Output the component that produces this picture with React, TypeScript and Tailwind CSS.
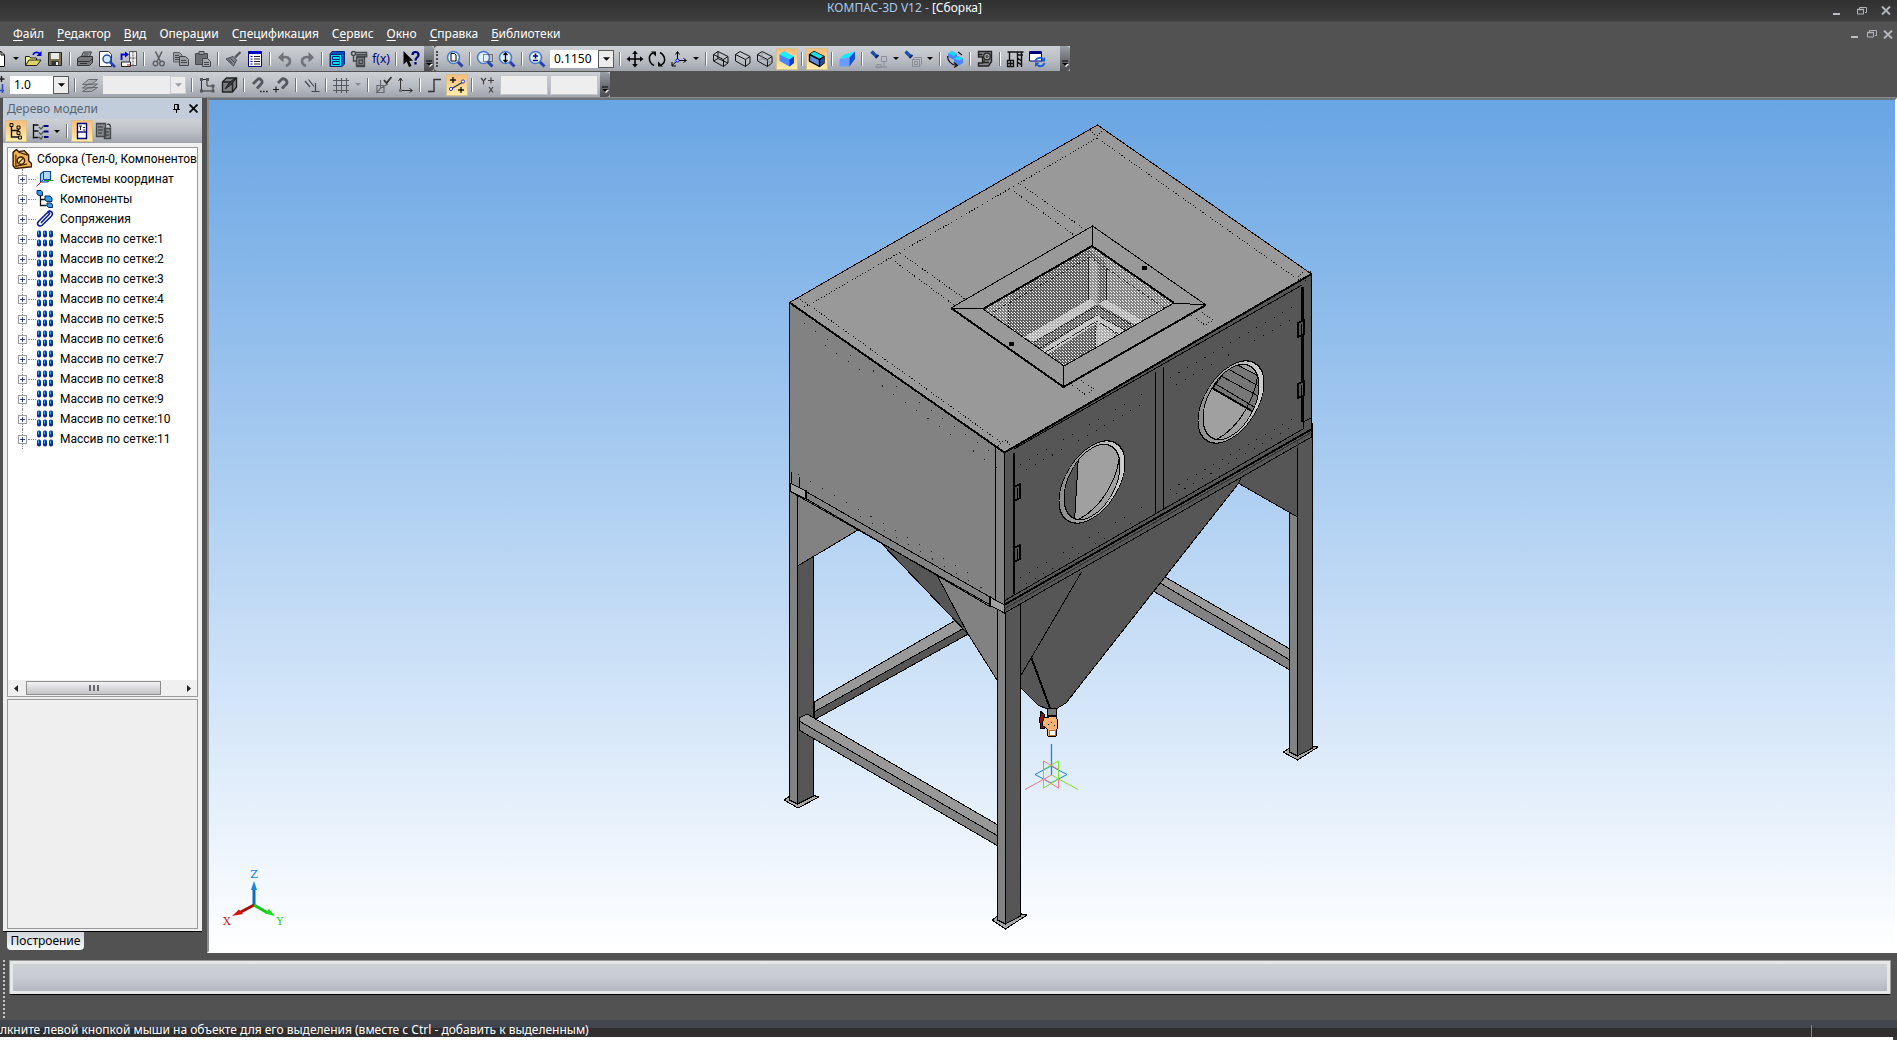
import type { ReactNode } from "react";

const C = "#2b2b2b";
const G = "#5d6066";
const NAVY = "#000080";

function Svg({ children, size = 18 }: { children: ReactNode; size?: number }) {
  return (
    <svg viewBox="0 0 18 18" width={size} height={size} fill="none" stroke={C} strokeWidth="1" aria-hidden="true" className="shrink-0">
      {children}
    </svg>
  );
}

const Lens = ({ children }: { children: ReactNode }) => (
  <Svg>
    <circle cx="7.5" cy="7.5" r="6" fill="#dff0fb" stroke="#4a7ac8" strokeWidth="1.6" />
    <path d="M12 12l4.5 4.5" stroke="#2a3fb0" strokeWidth="3" />
    {children}
  </Svg>
);

const cubeEdges = "M1.5 4.5L6 1.5L16 6.5V13L11.5 16.5L1.5 11Z";
const cubeInner = "M1.5 4.5L11.5 9.5V16.5M11.5 9.5L16 6.5";

const icons: Record<string, ReactNode> = {
  fresh: (
    <Svg>
      <path d="M3 1.5h8l3.500 3.500v11.500h-11.500z" fill="#fff" stroke="#000" />
      <path d="M11 1.500v3.500h3.500" stroke="#000" />
    </Svg>
  ),
  open: (
    <Svg>
      <path d="M1.500 15.500V6.500h4l1 1.500h6v2" fill="#f3ee9a" stroke="#222" />
      <path d="M1.500 15.500L5 10h12l-4 5.500z" fill="#d9d36a" stroke="#222" />
      <path d="M9 5c1-3 5-3.500 7-1" stroke="#0000d8" strokeWidth="1.800" />
      <path d="M17.500 1v5h-5z" fill="#0000d8" stroke="none" />
    </Svg>
  ),
  save: (
    <Svg>
      <path d="M2.500 2.500h13v13h-13z" fill="#7a7157" stroke="#222" />
      <path d="M5 3h8v6H5z" fill="#e8e8e8" stroke="none" />
      <path d="M5.500 11h7v4.500h-7z" fill="#333" stroke="none" />
      <path d="M10 12h2v3h-2z" fill="#fff" stroke="none" />
    </Svg>
  ),
  print: (
    <Svg>
      <path d="M5 7.500L7.500 2h8L13 7.500" fill="#aaadb2" stroke="#333" />
      <path d="M1.500 8.500l3-2h12v6l-3 3h-12z" fill="#777a7f" stroke="#333" />
      <path d="M1.500 11.500h12l3-3M4 13.500h7M8 4h5M7 6h5" stroke="#333" />
    </Svg>
  ),
  preview: (
    <Svg>
      <path d="M1.500 1.500h9l3 3v12h-12z" fill="#fff" stroke="#333" />
      <circle cx="9" cy="9" r="4" fill="#cfe6fa" stroke="#2a4a9c" strokeWidth="1.500" />
      <path d="M12 12l5 5" stroke="#2a3fb0" strokeWidth="2.600" />
    </Svg>
  ),
  convert: (
    <Svg>
      <path d="M9.500 1.500h7v14h-7z" fill="#eee" stroke="#555" />
      <path d="M9.500 8h7M13 1.500v14" stroke="#555" strokeDasharray="2 1" />
      <path d="M1.500 12h9v4.500h-9z" fill="#fff" stroke="#222" />
      <path d="M1.500 10V4.500h4" stroke="#0000d8" strokeWidth="1.800" />
      <path d="M5 1.500l4 3-4 3z" fill="#0000d8" stroke="none" />
      <path d="M7 15h3" stroke="#d00" />
    </Svg>
  ),
  cut: (
    <Svg>
      <path d="M5.500 1.500l5 10M12 1.500l-5 10" stroke={G} strokeWidth="1.600" />
      <circle cx="5.500" cy="13.500" r="2.300" stroke={G} strokeWidth="1.400" />
      <circle cx="12" cy="13.500" r="2.300" stroke={G} strokeWidth="1.400" />
    </Svg>
  ),
  copy: (
    <Svg>
      <path d="M1.500 2.500h6l2.500 2.500v7h-8.500z" fill="#9b9ea3" stroke={G} />
      <path d="M7.500 6.500h6l3 3v6h-9z" fill="#9b9ea3" stroke="#44474c" />
      <path d="M3 5.500h4M3 7.500h4M3 9.500h4M9 10.500h5M9 12.500h6" stroke="#44474c" />
    </Svg>
  ),
  paste: (
    <Svg>
      <path d="M1.500 3.500h12v11h-12z" fill="#6c6f74" stroke="#44474c" />
      <path d="M5 1.500h5v3H5z" fill="#9b9ea3" stroke="#44474c" />
      <path d="M8.500 8.500h5l3 3v5h-8z" fill="#a5a8ad" stroke="#44474c" />
      <path d="M10 12.500h5M10 14.500h5" stroke="#44474c" />
    </Svg>
  ),
  brush: (
    <Svg>
      <path d="M16.500 2L11 7.500" stroke="#55585d" strokeWidth="2.400" />
      <path d="M2 9l7-2.500 3.500 3.500-3 6z" fill="#85888d" stroke="#44474c" />
      <path d="M4.500 9.500l4 4M6.500 8.500l4 4" stroke="#44474c" />
    </Svg>
  ),
  props: (
    <Svg>
      <path d="M2.500 1.500h13v15h-13z" fill="#fff" stroke={NAVY} />
      <path d="M2.500 2.500h13" stroke="#0000c8" strokeWidth="3" />
      <path d="M4.500 6.500h2M4.500 9h2M4.500 11.500h2M4.500 14h2" stroke="#0000c8" />
      <path d="M8 6.500h6M8 9h6M8 11.500h6M8 14h6" stroke="#222" />
    </Svg>
  ),
  undo: (
    <Svg>
      <path d="M6 7.500c5-1.500 8 1 8 3.500s-1.500 4-4 5" stroke="#6f7277" strokeWidth="2.600" />
      <path d="M2 7.500L7.500 2v10.500z" fill="#6f7277" stroke="none" />
    </Svg>
  ),
  redo: (
    <Svg>
      <path d="M12 7.500c-5-1.500-8 1-8 3.500s1.500 4 4 5" stroke="#6f7277" strokeWidth="2.600" />
      <path d="M16 7.500L10.500 2v10.500z" fill="#6f7277" stroke="none" />
    </Svg>
  ),
  cabinet: (
    <Svg>
      <path d="M2 4l2-2.500h12.500V14L14 16.500H2z" fill="#0050c8" stroke="#002a78" />
      <path d="M2.500 4.500h11v12h-11z" fill="#00e0f0" stroke="#002a78" />
      <path d="M4.500 6.500h7v3h-7zM4.500 11.500h7v3h-7z" stroke="#002a78" />
    </Svg>
  ),
  vars: (
    <Svg>
      <path d="M7 4.500h9.500v2H7zM6.500 7.500h8v8h-8z" fill="#8f9297" stroke="#44474c" strokeWidth="1.400" />
      <circle cx="3.500" cy="3.500" r="2" stroke="#44474c" strokeWidth="1.500" />
      <path d="M5.500 2.500h11v5M6 16.500h9M3.500 6v5h3M9 10h3.500v3.500H9z" stroke="#44474c" strokeWidth="1.400" />
    </Svg>
  ),
  help: (
    <Svg>
      <path d="M1.500 1v13.500l3.200-3L7 17l2.500-1-2.300-5.200H11z" fill="#000" stroke="none" />
      <path d="M10.500 5c0-4 6-4 6 0 0 2.500-3 2.500-3 5.500M13.500 12v2.500" stroke={NAVY} strokeWidth="2.200" />
    </Svg>
  ),
  zoomPage: (
    <Lens>
      <path d="M5 3.500h3.500l1.500 1.500v6H5z" fill="#fff" stroke="#000" />
    </Lens>
  ),
  zoomFrame: (
    <Lens>
      <path d="M7.500 4.500h9v7h-9z" stroke="#222" strokeDasharray="1 1" />
    </Lens>
  ),
  zoomFit: (
    <Lens>
      <path d="M7.500 3v9M5.500 5l2-2 2 2M5.500 10l2 2 2-2" stroke="#000" strokeWidth="1.300" />
    </Lens>
  ),
  zoomPm: (
    <Lens>
      <path d="M7.500 3.500v5M5 6h5M5 10.500h5" stroke={NAVY} strokeWidth="1.500" />
    </Lens>
  ),
  move: (
    <Svg>
      <path d="M9 2v14M2 9h14" stroke="#000" strokeWidth="1.600" />
      <path d="M9 0.500l2.800 3.500H6.200zM9 17.500l2.800-3.500H6.200zM0.500 9l3.500-2.800v5.600zM17.500 9l-3.500-2.800v5.600z" fill="#000" stroke="none" />
    </Svg>
  ),
  rotate: (
    <Svg>
      <path d="M6 15.500C0 12 0 5 5 3M12 2.500c6 3.500 6 10.500 1 12.500" stroke="#000" strokeWidth="1.500" />
      <path d="M3 1.500h5V6.500zM15 16.500h-5V11.500z" fill="#000" stroke="none" />
    </Svg>
  ),
  axes: (
    <Svg>
      <path d="M7.500 10.500V2M5.500 4.500l2-3 2 3M8 10.500h8M13.500 8.500l3 2-3 2M7 11l-5 4.500M2 12v4h4" stroke="#000" />
      <circle cx="7.500" cy="10.500" r="1.600" stroke="#0000d8" fill="#cfe0ff" />
    </Svg>
  ),
  cubeWire: (
    <Svg>
      <path d={cubeEdges} stroke="#111" />
      <path d={cubeInner} stroke="#111" />
      <path d="M6 1.500V8.500L1.500 11M6 8.500L16 13" stroke="#111" />
    </Svg>
  ),
  cubeHidden: (
    <Svg>
      <path d={cubeEdges} stroke="#111" />
      <path d={cubeInner} stroke="#111" />
    </Svg>
  ),
  cubeThin: (
    <Svg>
      <path d={cubeEdges} stroke="#111" />
      <path d={cubeInner} stroke="#111" />
      <path d="M6 1.500V8.500L1.500 11M6 8.500L16 13" stroke="#85888d" />
    </Svg>
  ),
  cubeShade: (
    <Svg>
      <path d={cubeEdges} fill="#4b86ff" stroke="none" />
      <path d="M1.500 4.500L6 1.500L16 6.500L11.500 9.500Z" fill="#19f0ff" stroke="none" />
      <path d="M11.500 9.500L16 6.500V13L11.500 16.500Z" fill="#0a3fd0" stroke="none" />
    </Svg>
  ),
  cubeShadeWire: (
    <Svg>
      <path d={cubeEdges} fill="#5b8de0" stroke="#000" strokeWidth="1.400" />
      <path d="M1.500 4.500L6 1.500L16 6.500L11.500 9.500Z" fill="#19e0f0" stroke="none" />
      <path d="M11.500 9.500L16 6.500V13L11.500 16.500Z" fill="#1c4ea8" stroke="none" />
      <path d={cubeInner} stroke="#000" strokeWidth="1.400" />
    </Svg>
  ),
  perspective: (
    <Svg>
      <path d="M1.500 9L6 4.500L17 1.500L11.500 7.500Z" fill="#19e8ff" stroke="none" />
      <path d="M1.500 9l10-1.500v9h-10z" fill="#6b9bff" stroke="none" />
      <path d="M11.500 7.500L17 1.500V9l-5.500 7.500z" fill="#1450d8" stroke="none" />
    </Svg>
  ),
  torch1: (
    <Svg>
      <path d="M1.500 1.500l5 5" stroke="#1c4ea8" strokeWidth="3.200" />
      <path d="M5.500 8l3-3" stroke="#0b2a70" strokeWidth="2" />
      <path d="M11.500 6.500h5v5h-5zM7 14.500h4v3H7zM14 12v4.500M5 17h12" stroke="#8a8d92" />
    </Svg>
  ),
  torch2: (
    <Svg>
      <path d="M1.500 1.500l5 5" stroke="#1c4ea8" strokeWidth="3.200" />
      <path d="M5.500 8l3-3" stroke="#0b2a70" strokeWidth="2" />
      <path d="M8.500 9.500h7v7h-7zM8.500 9.500l2-2h7v7l-2 2M10.500 11.500h3v3h-3z" stroke="#8a8d92" />
    </Svg>
  ),
  orbit: (
    <Svg>
      <path d="M2 3.500l4-2.500 5 3v4L8 10 2 7zM8 8.500l4-2.500 5 2.500v4.500l-4 2.500-5-3z" fill="#4b86ff" stroke="none" />
      <path d="M2 3.500l4-2.500 5 3-3 2zM8 8.500l4-2.500 5 2.500-4 2z" fill="#19d8f8" stroke="none" />
      <path d="M1.500 6c0 5 4 9 9 9.500M8 12.500l3.500 3L8 17.500M12 2l4 3" stroke="#111" strokeWidth="1.200" />
    </Svg>
  ),
  section: (
    <Svg>
      <path d="M2.500 1.500h13v10l-3 4.500h-10v-3h4v-6h-4z" fill="#85888d" stroke="#222" strokeWidth="1.400" />
      <circle cx="11" cy="6.500" r="3.300" fill="#a5a8ad" stroke="#222" strokeWidth="1.300" />
      <circle cx="11" cy="6.500" r="1" stroke="#222" />
      <path d="M6.500 4.500H3M7 12.500h6M8 10v3" stroke="#222" strokeWidth="1.300" />
    </Svg>
  ),
  crane: (
    <Svg>
      <path d="M1.500 2h16M11 5h6M11.500 2v15M15.500 2v15M11.500 8l4 3M11.500 12l4 3M3.500 2v8" stroke="#111" strokeWidth="1.400" />
      <path d="M1.500 10.500h6v6h-6zM1.500 13.500h6M4.500 10.500v6" stroke="#111" strokeWidth="1.300" />
    </Svg>
  ),
  refresh: (
    <Svg>
      <path d="M1.500 2h12v9h-12z" fill="#fff" stroke={NAVY} />
      <path d="M1.500 2.500h12" stroke={NAVY} strokeWidth="3" />
      <path d="M7.500 11c1-4 6-4 7.500-1.500M16.500 13c-1 4-6 4-7.500 1.500" stroke="#1a5cd8" strokeWidth="1.800" />
      <path d="M17 7v4.500h-4.500zM7 17v-4.500h4.500z" fill="#1a5cd8" stroke="none" />
    </Svg>
  ),
  snapCut: (
    <Svg>
      <path d="M13.500 0v6M10.500 3h6" stroke="#222" strokeWidth="1.500" />
      <path d="M14.500 8v9M9 14.500h7" stroke="#2a4ad0" strokeWidth="1.600" />
    </Svg>
  ),
  layers: (
    <Svg>
      <path d="M1.500 15.500l6-4h9l-6 4zM1.500 12l6-4h9l-6 4zM1.500 8.500l6-5h9l-6 5z" fill="#a9acb1" stroke="#66696e" />
    </Svg>
  ),
  sketch: (
    <Svg>
      <path d="M3.500 3.500v11.500h11.500v-5h-6v-6.500z" stroke="#333" />
      <path d="M2 2h3v3H2zM8 2h3v3H8zM2 13.500h3v3H2zM13.500 13.500h3v3h-3zM13.500 8.500h3v3h-3z" fill="#55585d" stroke="none" />
    </Svg>
  ),
  solid: (
    <Svg>
      <path d="M2.500 6l4-4h10v9l-4 5h-10z" fill="#7b7e83" stroke="#222" strokeWidth="1.400" />
      <path d="M2.500 6h10v10M12.500 6l4-4" stroke="#222" strokeWidth="1.400" />
      <path d="M5 13l4-6 6-5-3 6z" fill="#3a3c40" stroke="#222" />
    </Svg>
  ),
  magnet: (
    <Svg>
      <path d="M3 8l4.500-4.500c2-2 6 1.500 4 4L7 12.500" stroke="#55585d" strokeWidth="2.800" />
      <path d="M10 15.500h1.600M13 15.500h1.600M16 15.500h1.600" stroke="#222" strokeWidth="1.600" />
    </Svg>
  ),
  magnetPick: (
    <Svg>
      <path d="M6 7l3.500-3.500c2-2 7 1 5 4.500L10 12.500" stroke="#55585d" strokeWidth="2.800" />
      <path d="M4 10.500v6M1 13.500h6" stroke="#222" strokeWidth="1.200" />
    </Svg>
  ),
  perp: (
    <Svg>
      <path d="M3 5l5 6M6.500 3.500l5.500 7M13.500 7v8.500M9.500 15.500h8" stroke="#44474c" strokeWidth="1.200" />
    </Svg>
  ),
  grid: (
    <Svg>
      <path d="M1 4.500h16M1 9.500h16M1 14.500h16M4.500 2v15M9.500 2v15M14.500 2v15" stroke="#55585d" />
    </Svg>
  ),
  plane: (
    <Svg>
      <path d="M3 9.500h7v7H3zM6 12.500L14 8M6.500 4v8.500L2 17" stroke="#66696e" strokeWidth="1.200" />
      <path d="M10 4l2.500 3 5-6" stroke="#333" strokeWidth="1.800" />
    </Svg>
  ),
  localAxes: (
    <Svg>
      <path d="M4.500 14V2.500M2.500 5l2-3 2 3M5 14.500h11M13.500 12.500l3 2-3 2" stroke="#333" />
      <path d="M3 13h3v3H3z" fill="#777" stroke="none" />
    </Svg>
  ),
  ortho: (
    <Svg>
      <path d="M2 15.500h6V3.500h7" stroke="#333" strokeWidth="1.400" />
    </Svg>
  ),
  round: (
    <Svg>
      <path d="M3 13L15 6" stroke="#333" strokeWidth="1.400" />
      <path d="M5 1v6M2 4h6M13 11v6M10 14h6" stroke="#111" strokeWidth="1.300" />
      <circle cx="3" cy="13" r="1.600" stroke="#2233cc" fill="#fff" />
      <circle cx="15" cy="5.500" r="1.600" stroke="#2233cc" fill="#fff" />
    </Svg>
  ),
  coords: (
    <Svg>
      <path d="M3 2l2.500 3L8 2M5.500 5v3.500M11 11l4 5.500M15 11l-4 5.500M13 1.500v6M10 4.500h6" stroke="#444" strokeWidth="1.200" />
    </Svg>
  ),
  treeA: (
    <Svg>
      <path d="M4.500 3v12h7M4.500 8.500h7M11.500 5.500v3" stroke="#111" strokeWidth="1.400" />
      <path d="M3 1.500h3v3H3zM10 4h3v3h-3zM10 9.500h3v3h-3zM11.500 14h3v3h-3z" fill="#e7c06a" stroke="#111" />
    </Svg>
  ),
  treeB: (
    <Svg>
      <path d="M2.500 2v14.500M2.500 3h5M2.500 9h5M2.500 15.500h5" stroke="#111" strokeWidth="1.300" />
      <path d="M8 5l2 2 3-3.500M8 10.500l2 2 3-3.500M8 15l2 2 2-3" stroke="#55585d" strokeWidth="1.200" />
      <path d="M13 4h4.500M13 9.500h4.500M13 15h4.500" stroke={NAVY} strokeWidth="2" />
    </Svg>
  ),
  treeC: (
    <Svg>
      <path d="M4.500 1.500h9v15h-9z" fill="#fff" stroke={NAVY} strokeWidth="1.400" />
      <path d="M4.500 10h9" stroke={NAVY} strokeWidth="1.400" />
      <path d="M6 4h3M7.500 4v4M10 5.500h2M10 8h2" stroke="#222" />
    </Svg>
  ),
  treeD: (
    <Svg>
      <path d="M1.500 1.500h9v13h-9zM9.500 6.500h6v10h-6z" fill="#85888d" stroke="#44474c" strokeWidth="1.300" />
      <path d="M3 5h5M3 8h5M3 11h4M11 10h3M11 13h3M12 2.500c2-1 3.500 0 3.500 3" stroke="#333" strokeWidth="1.200" />
    </Svg>
  ),
};

const triangle = <path d="M0 0h6l-3 3z" fill="currentColor" />;

function Tool({ icon, label, on = false }: { icon: string; label: string; on?: boolean }) {
  return (
    <button
      type="button"
      aria-label={label}
      title={label}
      className={
        "flex h-[22px] w-[22px] shrink-0 items-center justify-center " +
        (on ? "border border-[#d8c08a] bg-linear-to-b from-[#f6bd7c] to-[#fdedaa]" : "")
      }
    >
      {icons[icon]}
    </button>
  );
}

function Drop({ label, muted = false }: { label: string; muted?: boolean }) {
  return (
    <button type="button" aria-label={label} className={"flex h-[22px] w-3 shrink-0 items-center justify-center " + (muted ? "text-[#85888d]" : "text-black")}>
      <svg width="6" height="3" viewBox="0 0 6 3" aria-hidden="true">{triangle}</svg>
    </button>
  );
}

const Sep = () => (
  <span className="flex h-[22px] w-2 shrink-0 items-center justify-center">
    <span className="h-3.5 w-0.5 border-l border-[#6f737a] bg-white" />
  </span>
);

function End() {
  return (
    <button type="button" aria-label="Параметры панели" className="flex h-full w-2.5 shrink-0 items-end justify-center rounded-r bg-linear-to-b from-[#9b9fa6] to-[#4a4c50] pb-1 text-white">
      <svg width="7" height="7" viewBox="0 0 7 7" aria-hidden="true">
        <path d="M0 1h6" stroke="#000" strokeWidth="1" />
        <path d="M1 4h6l-3 3z" fill="#fff" />
        <path d="M0 3h6l-3 3z" fill="#000" />
      </svg>
    </button>
  );
}

function Combo({ value, label, field, disabled = false }: { value: string; label: string; field: string; disabled?: boolean }) {
  return (
    <div className={"mx-0.5 flex h-[18px] shrink-0 " + (disabled ? "bg-[#ececec]" : "bg-white")}>
      <input aria-label={label} defaultValue={value} disabled={disabled} className={"bg-transparent pl-1 font-['Noto_Sans'] text-[12px] leading-[18px] text-black outline-none " + field} />
      <button
        type="button"
        aria-label={label + ": список"}
        disabled={disabled}
        className={"flex w-4 items-center justify-center border bg-[#ececec] " + (disabled ? "border-[#c9ccd0] text-[#9a9da2]" : "border-[#55585d] text-black")}
      >
        <svg width="7" height="4" viewBox="0 0 6 3" aria-hidden="true">{triangle}</svg>
      </button>
    </div>
  );
}

const bar = "flex items-center bg-linear-to-b from-[#cdd0d4] via-[#bcc0c6] to-[#a0a4ad]";

const menu: [string, string, string][] = [
  ["", "Ф", "айл"],
  ["", "Р", "едактор"],
  ["", "В", "ид"],
  ["Опера", "ц", "ии"],
  ["С", "п", "ецификация"],
  ["С", "е", "рвис"],
  ["", "О", "кно"],
  ["", "С", "правка"],
  ["", "Б", "иблиотеки"],
];

function WindowButtons({ gap }: { gap: string }) {
  return (
    <div className={"flex items-center " + gap}>
      <button type="button" aria-label="Свернуть" className="flex h-3 w-2.5 items-end">
        <span className="mb-0.5 h-0.5 w-[7px] bg-[#b9bcc2]" />
      </button>
      <button type="button" aria-label="Восстановить">
        <svg width="10" height="8" viewBox="0 0 10 8" fill="none" stroke="#b0b3ba" aria-hidden="true">
          <path d="M2.500 2V0.500h7V5.500H8M0.500 2.500h6v4.500h-6z" />
          <path d="M0 2.500h7" strokeWidth="1.500" />
        </svg>
      </button>
      <button type="button" aria-label="Закрыть">
        <svg width="10" height="9" viewBox="0 0 10 9" stroke="#b0b3ba" strokeWidth="2" aria-hidden="true">
          <path d="M1 0.500l8 8M9 0.500l-8 8" />
        </svg>
      </button>
    </div>
  );
}

const GridIcon = () => (
  <Svg>
    {[1, 7, 13].map((x) =>
      [0.5, 9.5].map((y) => (
        <g key={x + "-" + y}>
          <rect x={x} y={y} width="4" height="7" rx="1.800" fill="#0b2aa0" stroke="none" />
          <path d={`M${x + 1.5} ${y + 1}v3`} stroke="#3fb4e8" strokeWidth="1.200" />
        </g>
      )),
    )}
  </Svg>
);

const treeItems: { text: string; icon: ReactNode }[] = [
  {
    text: "Системы координат",
    icon: (
      <Svg>
        <path d="M4.500 4l3-2.500h7v8l-3 2.500h-7z" fill="#a8dcf6" stroke="#16459c" strokeWidth="1.200" />
        <path d="M7.500 1.500v8h7M7.500 9.500l-3 2.500" stroke="#16459c" />
        <path d="M8 10.500h9.500" stroke="#1a9a3a" />
        <path d="M5 12l-4.500 4.500" stroke="#d01818" />
      </Svg>
    ),
  },
  {
    text: "Компоненты",
    icon: (
      <Svg>
        <path d="M4.500 5v10.500h6M4.500 9.500h6" stroke="#111" strokeWidth="1.300" />
        <path d="M1 0.500h4l1.500 1.500v3.500H3L1 4zM9 6h5l2 2v3.500h-5l-2-1.500zM11 13h4l1.500 1.500v3h-4L11 16z" fill="#2f9be8" stroke="#08246c" />
      </Svg>
    ),
  },
  {
    text: "Сопряжения",
    icon: (
      <Svg>
        <path d="M5 13l8-8.500c1.500-1.500-0.500-3-2-1.500L2.500 11.500c-2.500 3 1 6 4 3.500L15.500 6c2.500-3-1-6.500-4-4" stroke="#0b1f90" strokeWidth="1.600" />
      </Svg>
    ),
  },
  ...Array.from({ length: 11 }, (_, i) => ({ text: `Массив по сетке:${i + 1}`, icon: <GridIcon /> })),
];

function Circle({ cx, cy, id, children }: { cx: number; cy: number; id: string; children: ReactNode }) {
  return (
    <g>
      <defs>
        <clipPath id={id}>
          <ellipse rx="28" ry="34" transform={`matrix(1 -0.573 0 1 ${cx} ${cy})`} />
        </clipPath>
        <linearGradient id={id + "r"}>
          <stop offset="0" stopColor="#8c8c8c" />
          <stop offset="1" stopColor="#d0d0d0" />
        </linearGradient>
      </defs>
      <ellipse rx="33" ry="36.500" transform={`matrix(1 -0.573 0 1 ${cx} ${cy})`} fill={`url(#${id}r)`} stroke="#000" />
      <g clipPath={`url(#${id})`}>{children}</g>
      <ellipse rx="28" ry="34" transform={`matrix(1 -0.573 0 1 ${cx} ${cy})`} stroke="#000" />
    </g>
  );
}

function Model() {
  return (
    <svg viewBox="209 100 1686 851" className="h-full w-full" fill="none" stroke="#000" strokeWidth="1" shapeRendering="crispEdges" role="img" aria-label="Трёхмерная модель сборки">
      <defs>
        <pattern id="mesh" width="3" height="3" patternUnits="userSpaceOnUse">
          <path d="M0 0h1v1H0zM1 1h1v1H1z" fill="#f4f4f4" stroke="none" />
        </pattern>
        <clipPath id="hatch">
          <path d="M1092 246L1174 303L1064 366L983 309Z" />
        </clipPath>
      </defs>

      {/* rear braces */}
      <path d="M814 702L956 620L966 627L814 712Z" fill="#999" />
      <path d="M814 712L966 627L970 633L814 720Z" fill="#565656" />
      <path d="M1165 577L1290 649V660L1160 583Z" fill="#999" />
      <path d="M1160 583L1290 660V670L1153 591Z" fill="#828282" />

      {/* left leg */}
      <path d="M784 800L798 791L819 797L798 808Z" fill="#a8a8a8" />
      <path d="M797.500 500H813.500V796L797.500 804Z" fill="#565656" />
      <path d="M789.500 487H797.500V804L789.500 800Z" fill="#828282" />
      <path d="M797.500 495L858 530L797.500 566Z" fill="#828282" />

      {/* right leg */}
      <path d="M1283 752L1297 744L1318 747L1297.500 760Z" fill="#a8a8a8" />
      <path d="M1289.500 500H1297.500V756L1289.500 752Z" fill="#828282" />
      <path d="M1297.500 430L1312.500 424V748L1297.500 756Z" fill="#565656" />
      <path d="M1238 483L1240 470L1297.500 436V517Z" fill="#565656" />

      {/* hopper */}
      <path d="M881 543L937 575L968 634Z" fill="#565656" />
      <path d="M937 575L1005 612V695L997 680L968 634Z" fill="#828282" />
      <path d="M1015 598L1247 466L1238 484L1066 703L1056 709H1047L1038 705L1015 682Z" fill="#565656" />
      <path d="M1081.500 572L1020 677" />
      <path d="M1031.500 658L1051 711" strokeWidth="2" />

      {/* front brace and front leg */}
      <path d="M799 718L807 714L998 825V836L799 722Z" fill="#999" />
      <path d="M799 721L998 836V846L799 730Z" fill="#828282" />
      <path d="M992 920L1005 911L1027 915L1005.500 929Z" fill="#a8a8a8" />
      <path d="M1005.500 605L1020.500 597V916L1005.500 924Z" fill="#565656" />
      <path d="M997.500 600L1005.500 605V924L997.500 920Z" fill="#828282" />

      {/* left wall */}
      <path d="M789.500 302.500L1004.500 452.500V613L789.500 491Z" fill="#828282" />
      <path d="M805 491L990 597M805 498L989 606M995.500 446V602M791 472V484M799.500 477V487" />
      <path d="M790 483L806 491V499L790 491Z" fill="#a0a0a0" />
      <path d="M990 597L1004.500 605V613L989 605Z" fill="#a0a0a0" />
      <path d="M989.500 596V607M805.500 490V499" strokeWidth="2" />
      <path d="M804 323L998 457M798 474L990 586M825 345L1000 470M860 516L985 590" strokeDasharray="1 13" stroke="#222" />

      {/* front wall */}
      <path d="M1004.500 452.500L1311.500 274.500V437L1004.500 613Z" fill="#565656" />
      <path d="M1014 449L1302 285" />
      <path d="M1006 449L1311 272" strokeWidth="2" />
      <path d="M1014 453V594" strokeWidth="2.500" />
      <path d="M1302.500 287V422" strokeWidth="3" />
      <path d="M1016 594L1303 429M1303.500 420V429M1303 422L1311 418M1004 601L1016 594" />
      <path d="M1004 605L1312 429" strokeWidth="2" />
      <path d="M1004 609L1312 432M1297.500 440V448" stroke="#333" />
      <path d="M1155.500 372V514M1163.500 367V510" />
      <path d="M1020 465L1150 390M1026 470L1146 402M1170 378L1296 305M1176 385L1290 320M1020 578L1150 503M1026 584L1146 515M1170 490L1296 417M1176 494L1290 428" strokeDasharray="1 9" />
      {[
        [1014, 484],
        [1014, 545],
        [1298, 320],
        [1298, 381],
      ].map(([x, y]) => (
        <g key={x + "," + y}>
          <path d={`M${x} ${y + 3}l6-3v14l-6 3z`} fill="#555" strokeWidth="2" />
          <path d={`M${x + 3} ${y + 4}v10`} />
        </g>
      ))}

      <Circle cx={1092} cy={482} id="portA">
        <path d="M1050 430H1130V530H1050Z" fill="#a0a0a0" />
        <path d="M1050 430H1080L1074 530H1050Z" fill="#565656" />
        <path d="M1120 441C1122 476 1102 508 1076 521" />
      </Circle>
      <Circle cx={1231} cy={402} id="portB">
        <path d="M1190 350H1270V450H1190Z" fill="#a0a0a0" />
        <path d="M1213 388L1252 411L1266 400V380L1232 362Z" fill="#777" />
        <path d="M1212 388L1252 411" strokeWidth="2" />
        <path d="M1214 383L1256 408M1221 376L1260 397M1230 370L1262 388M1258 361C1260 394 1240 428 1214 441" />
      </Circle>

      {/* top plate */}
      <path d="M1097.500 125L1311.500 274L1004.500 452.500L789.500 302.500Z" fill="#999" />
      <path d="M789.500 302.500L1004.500 452.500L1311.500 274" strokeWidth="2" />
      <g strokeDasharray="1 2">
        <path d="M1097 138L809 305L1002 443M1097 138L1299 280M1090 130L1097 136L1104 130M797 298L809 305L800 309M1306 281L1298 277L1304 270M998 446L1005 440L1012 446" />
        <path d="M1020 184L1083 228M1009 188L1074 235M900 253L965 299M890 258L954 305" />
        <path d="M1191 315L1205 325L1213 320L1200 311M1072 385L1086 395L1094 389L1080 380" />
      </g>

      {/* hatch with its mesh */}
      <path d="M1092.500 226L1206 305L1063.500 387L951 308Z" fill="#999" />
      <g clipPath="url(#hatch)">
        <path d="M980 240H1180V370H980Z" fill="#626262" stroke="none" />
        <path d="M1092 246L1174 303L1142 322L1106 300V262L1089 250Z" fill="#858585" stroke="none" />
        <path d="M1088 256L1098 262V306L1088 302Z" fill="#909090" stroke="none" />
        <path d="M983 309L1010 294L1008 328Z" fill="#808080" stroke="none" />
        <path d="M1024 337L1090 299L1097 304L1034 342ZM1042 350L1097 314L1130 333L1120 336L1097 323L1048 354ZM1106 300L1142 320L1136 325L1098 304Z" fill="#b4b4b4" stroke="none" />
        <path d="M1097 323L1118 336L1095 350Z" fill="#acacac" stroke="none" />
        <path d="M1088.500 257V300M1106.500 268V300M1008.500 304V328M1095.500 323V348M1034 342L1097 306L1136 327M1040 348L1097 315L1130 333M1046 352L1097 321L1120 335" stroke="#222" />
        <path d="M993 312L1090 257L1166 309" strokeDasharray="4 2" stroke="#222" />
        <path d="M980 240H1180V370H980Z" fill="url(#mesh)" stroke="none" />
      </g>
      <path d="M1092 246L1174 303L1064 366L983 309Z" />
      <path d="M983 309L1092 246L1174 303" strokeWidth="2" />
      <path d="M951 308L1063.500 387L1206 305" strokeWidth="2" />
      <path d="M1092.500 226V246M1206 305L1174 303M1063.500 366V387M951 308L983 309" />
      <path d="M1142 268h5M1009 344h5" strokeWidth="4" />

      {/* valve */}
      <path d="M1047 708h9v8h-9z" fill="#777" />
      <path d="M1040 711l4 3v4l4-1v8l-4 4-4-1v-5l-1-3 1-3z" fill="#8c1010" />
      <path d="M1044 717l4 1 1-3h6l2 4v10l-1 7h-8l-1-7-5-4z" fill="#f7b274" />
      <path d="M1049 730h6v5h-6z" fill="#fff" stroke="#c07020" />
      <path d="M1049 716h6M1051 722h1M1048 724h1M1054 725h1" />

      {/* origin */}
      <g shapeRendering="auto">
        <path d="M1051.500 744V775" stroke="#1c86d8" strokeWidth="1.300" />
        <path d="M1035 774.500L1051 766L1067 774.500L1051 783Z" stroke="#1c86d8" />
        <path d="M1043.500 761L1058.500 769.500V788L1043.500 779ZM1051.500 775L1025 789.500" stroke="#f07880" />
        <path d="M1058.500 761L1043.500 769.500V788L1058.500 779ZM1051.500 775L1078 789.500" stroke="#7de028" />
      </g>
    </svg>
  );
}

function Triad() {
  return (
    <svg viewBox="0 0 64 62" width="64" height="62" className="absolute bottom-5 left-3" fontFamily="DejaVu Serif, serif" fontSize="11" textAnchor="middle" aria-label="Оси координат">
      <path d="M33 36V18" stroke="#0f6cb8" strokeWidth="3" />
      <path d="M33 12l3 9h-6z" fill="#1c86d8" />
      <path d="M33 36L18 44" stroke="#b00c0c" strokeWidth="3" />
      <path d="M11 47l7-6.500 4 4.500z" fill="#d01414" />
      <path d="M33 36L47 44" stroke="#12c812" strokeWidth="3" />
      <path d="M54 47l-10-2.500 4-4.500z" fill="#18e018" />
      <text x="33" y="9" fill="#1c86d8">Z</text>
      <text x="6" y="56" fill="#c81414">X</text>
      <text x="59" y="56" fill="#18d818">Y</text>
    </svg>
  );
}

export default function App() {
  return (
    <div className="flex h-screen flex-col overflow-hidden bg-[#525252] font-[Roboto,'Noto_Sans',sans-serif] text-[12px] text-black">
      <header className="relative flex h-[22px] shrink-0 items-center justify-end border-b border-[#4a4a4a] bg-linear-to-b from-[#303030] to-[#3f3f3f] pr-1.5">
        <h1 className="absolute inset-x-0 top-0 pr-[88px] text-center font-['Noto_Sans'] text-[12px] leading-4 text-white">
          <span className="text-[#a9c9ec]">КОМПАС-3D V12 - </span>[Сборка]
        </h1>
        <WindowButtons gap="gap-3.5" />
      </header>

      <nav className="flex h-6 shrink-0 items-center justify-between pr-1 pl-[13px]">
        <ul className="flex gap-[13px] font-['Noto_Sans'] text-[12px] text-white">
          {menu.map(([a, key, b]) => (
            <li key={a + key + b}>
              <button type="button" className="leading-6">
                {a}
                <span className="underline underline-offset-2">{key}</span>
                {b}
              </button>
            </li>
          ))}
        </ul>
        <WindowButtons gap="gap-1.5" />
      </nav>

      <div className="flex h-[26px] shrink-0 items-start">
        <div className={bar + " h-[25px]"}>
          <span className="flex w-2.5 justify-end overflow-hidden">
            <Tool icon="fresh" label="Создать" />
          </span>
          <Drop label="Создать: список" />
          <Tool icon="open" label="Открыть" />
          <Tool icon="save" label="Сохранить" />
          <Sep />
          <Tool icon="print" label="Печать" />
          <Tool icon="preview" label="Предварительный просмотр" />
          <Tool icon="convert" label="Преобразовать" />
          <Sep />
          <Tool icon="cut" label="Вырезать" />
          <Tool icon="copy" label="Копировать" />
          <Tool icon="paste" label="Вставить" />
          <Sep />
          <Tool icon="brush" label="Копировать свойства" />
          <Tool icon="props" label="Свойства" />
          <Sep />
          <Tool icon="undo" label="Отменить" />
          <Tool icon="redo" label="Повторить" />
          <Sep />
          <Tool icon="cabinet" label="Менеджер библиотек" />
          <Tool icon="vars" label="Переменные" />
          <button type="button" aria-label="Функции" className="w-[22px] shrink-0 font-['Noto_Sans'] text-[12px] leading-[22px] text-[#000080]">f(x)</button>
          <Sep />
          <Tool icon="help" label="Справка" />
          <span className="w-0.5" />
          <End />
        </div>
        <div className={bar + " h-[25px] rounded-l pl-0.5"}>
          <span className="mr-0.5 h-4 w-1.5 border-l-2 border-dotted border-[#4a4c50]" />
          <Tool icon="zoomPage" label="Показать всё" />
          <Sep />
          <Tool icon="zoomFrame" label="Увеличить рамкой" />
          <Tool icon="zoomFit" label="Приблизить" />
          <Sep />
          <Tool icon="zoomPm" label="Масштаб" />
          <Combo value="0.1150" label="Текущий масштаб" field="w-12" />
          <Sep />
          <Tool icon="move" label="Сдвинуть" />
          <Tool icon="rotate" label="Повернуть" />
          <Tool icon="axes" label="Ориентация" />
          <Drop label="Ориентация: список" />
          <Sep />
          <Tool icon="cubeWire" label="Каркас" />
          <Tool icon="cubeHidden" label="Без невидимых линий" />
          <Tool icon="cubeThin" label="Невидимые линии тонкие" />
          <Tool icon="cubeShade" label="Полутоновое" on />
          <Sep />
          <Tool icon="cubeShadeWire" label="Полутоновое с каркасом" on />
          <Sep />
          <Tool icon="perspective" label="Перспектива" />
          <Sep />
          <span className="w-0.5" />
          <Tool icon="torch1" label="Скрыть объекты" />
          <Drop label="Скрыть объекты: список" />
          <Tool icon="torch2" label="Скрыть компоненты" />
          <Drop label="Скрыть компоненты: список" />
          <Sep />
          <Tool icon="orbit" label="Упрощённое отображение" />
          <Sep />
          <Tool icon="section" label="Сечение модели" />
          <Sep />
          <Tool icon="crane" label="Разнести" />
          <Tool icon="refresh" label="Перестроить" />
          <span className="w-3" />
          <End />
        </div>
      </div>

      <div className="flex h-[25px] shrink-0 items-start">
        <div className={bar + " h-[25px]"}>
          <span className="flex w-2 justify-end overflow-hidden">
            <Tool icon="snapCut" label="Шаг курсора" />
          </span>
          <Combo value="1.0" label="Текущий шаг курсора" field="w-[43px]" />
          <Sep />
          <Tool icon="layers" label="Слои" />
          <Combo value="" label="Текущий слой" field="w-[67px]" disabled />
          <Sep />
          <Tool icon="sketch" label="Эскиз" />
          <Tool icon="solid" label="Операция" />
          <Sep />
          <Tool icon="magnet" label="Привязки" />
          <Tool icon="magnetPick" label="Запретить привязки" />
          <Sep />
          <Tool icon="perp" label="Параметрический режим" />
          <Sep />
          <Tool icon="grid" label="Сетка" />
          <Drop label="Сетка: список" muted />
          <Sep />
          <Tool icon="plane" label="Плоскость" />
          <Tool icon="localAxes" label="Локальная система координат" />
          <Sep />
          <Tool icon="ortho" label="Ортогональное черчение" />
          <Tool icon="round" label="Округление" on />
          <Sep />
          <Tool icon="coords" label="Координаты курсора" />
          <input aria-label="Координата X" disabled className="ml-0.5 h-5 w-12 border border-[#c2c5ca] bg-[#eee]" />
          <input aria-label="Координата Y" disabled className="mx-0.5 h-5 w-12 border border-[#c2c5ca] bg-[#eee]" />
          <End />
        </div>
      </div>

      <main className="flex min-h-0 flex-1 border-t border-[#8a8a86]">
        <aside className="ml-[3px] flex w-[199px] shrink-0 flex-col">
          <section className="flex min-h-0 flex-1 flex-col border-b border-black bg-[#efefef]">
            <header className="flex h-[21px] shrink-0 items-center justify-between bg-[#c1cdda] pr-1 pl-1">
              <h2 className="text-[12px] font-['Noto_Sans'] text-[#5a6470]">Дерево модели</h2>
              <div className="flex items-center gap-2">
                <button type="button" aria-label="Закрепить">
                  <svg width="9" height="9" viewBox="0 0 9 9" fill="none" stroke="#000" aria-hidden="true">
                    <path d="M2.500 5V0.500h4V5M1 5.500h7M4.500 6v3" />
                    <path d="M6 1v4" strokeWidth="1.500" />
                  </svg>
                </button>
                <button type="button" aria-label="Закрыть панель">
                  <svg width="9" height="9" viewBox="0 0 9 9" stroke="#000" strokeWidth="1.700" aria-hidden="true">
                    <path d="M0.500 0.500l8 8M8.500 0.500l-8 8" />
                  </svg>
                </button>
              </div>
            </header>
            <div className={bar + " h-6 shrink-0 px-0.5"}>
              <Tool icon="treeA" label="Структура модели" on />
              <span className="w-0.5" />
              <Tool icon="treeB" label="Состав дерева" />
              <Drop label="Состав дерева: список" />
              <Sep />
              <Tool icon="treeC" label="Раздел" on />
              <Tool icon="treeD" label="Дополнительное окно" />
            </div>

            <div className="m-1 mb-0.5 flex min-h-0 flex-1 flex-col border border-[#9a9a9a] bg-white">
              <div className="min-h-0 flex-1 overflow-hidden pt-px pl-1">
                <p className="flex h-5 items-center gap-[5px] whitespace-nowrap">
                  <Svg size={20}>
                    <path d="M1 3l3-2.500 2 2 5-1 4 4v5l2.500 2.500V16L3 17.500 1 15z" fill="#f0b55a" stroke="#3a1c00" strokeWidth="1.300" />
                    <path d="M3.500 5v10.500l10-2M6 3l8 2.500" stroke="#3a1c00" />
                    <circle cx="8" cy="10.500" r="3.300" fill="#f8d79a" stroke="#3a1c00" strokeWidth="1.300" />
                    <path d="M6 12.500l4-4" stroke="#3a1c00" />
                  </Svg>
                  Сборка (Тел-0, Компонентов
                </p>
                <ul>
                  {treeItems.map(({ text, icon }) => (
                    <li key={text} className="flex h-5 items-center">
                      <span className="flex h-5 w-5 shrink-0 flex-col items-center">
                        <span className="flex-1 border-l border-dotted border-[#8a8a8a]" />
                        <button type="button" aria-label={"Развернуть " + text} className="flex h-[9px] w-[9px] items-center justify-center border border-[#9a9da2] bg-white text-[#2a3a70]">
                          <svg width="5" height="5" viewBox="0 0 5 5" stroke="currentColor" aria-hidden="true">
                            <path d="M0 2.500h5M2.500 0v5" />
                          </svg>
                        </button>
                        <span className="flex-1 border-l border-dotted border-[#8a8a8a]" />
                      </span>
                      <span className="-ml-1 w-2 shrink-0 border-t border-dotted border-[#8a8a8a]" />
                      {icon}
                      <span className="ml-1.5 whitespace-nowrap">{text}</span>
                    </li>
                  ))}
                </ul>
              </div>
              <div className="flex h-4 shrink-0 items-center gap-2 bg-[#f0f0f0] px-1.5">
                <button type="button" aria-label="Прокрутить влево">
                  <svg width="4" height="7" viewBox="0 0 4 7" aria-hidden="true"><path d="M4 0v7L0 3.500z" fill="#222" /></svg>
                </button>
                <div className="flex h-3.5 w-[135px] items-center justify-center gap-px border border-[#8e8e8e] bg-linear-to-b from-[#f2f2f2] to-[#c4c4c8]">
                  <span className="h-1.5 w-0.5 bg-[#66696e]" />
                  <span className="mx-px h-1.5 w-0.5 bg-[#66696e]" />
                  <span className="h-1.5 w-0.5 bg-[#66696e]" />
                </div>
                <button type="button" aria-label="Прокрутить вправо" className="ml-auto">
                  <svg width="4" height="7" viewBox="0 0 4 7" aria-hidden="true"><path d="M0 0v7l4-3.500z" fill="#222" /></svg>
                </button>
              </div>
            </div>
            <div className="mx-1 mb-0.5 h-[230px] shrink-0 border border-[#9a9a9a]" />
          </section>
          <div className="h-[21px] shrink-0 pl-1">
            <button type="button" className="h-[18px] w-[77px] rounded-b bg-linear-to-b from-[#d2d6dc] to-[#f4f8f8] text-center font-['Noto_Sans'] leading-4">Построение</button>
          </div>
        </aside>

        <section className="relative ml-[5px] min-w-0 flex-1 border-2 border-t-[#6c7480] border-r-white border-b-white border-l-[#8a8d90] bg-linear-to-b from-[#68a5e3] to-white">
          <Model />
          <Triad />
        </section>
      </main>

      <footer className="shrink-0">
        <div className="flex h-[67px] items-start gap-1 py-[7px] pr-[6px] pl-[3px]">
          <span className="h-[58px] w-0.5 border-l-2 border-dotted border-[#c8c8c8]" />
          <div className="h-[35px] flex-1 border border-b-black border-t-[#9a9a9a] border-x-[#9a9a9a] bg-[#e6e8e8] p-[3px]">
            <div className="h-full bg-linear-to-b from-[#cdd0d5] via-[#c8cbd1] to-[#b4b8c1]" />
          </div>
        </div>
        <div className="flex h-[17px] items-end overflow-hidden bg-linear-to-b from-[#41454e] from-45% to-[#2f2d2e] to-50% text-white">
          <p className="-ml-[19px] font-['Noto_Sans'] leading-[14px] whitespace-nowrap">Щелкните левой кнопкой мыши на объекте для его выделения (вместе с Ctrl - добавить к выделенным)</p>
          <span className="mr-[85px] ml-auto h-3 w-px bg-[#85888d]" />
        </div>
        <div className="h-[3px] border-r-4 border-[#3a3a3a] bg-white" />
      </footer>
    </div>
  );
}
